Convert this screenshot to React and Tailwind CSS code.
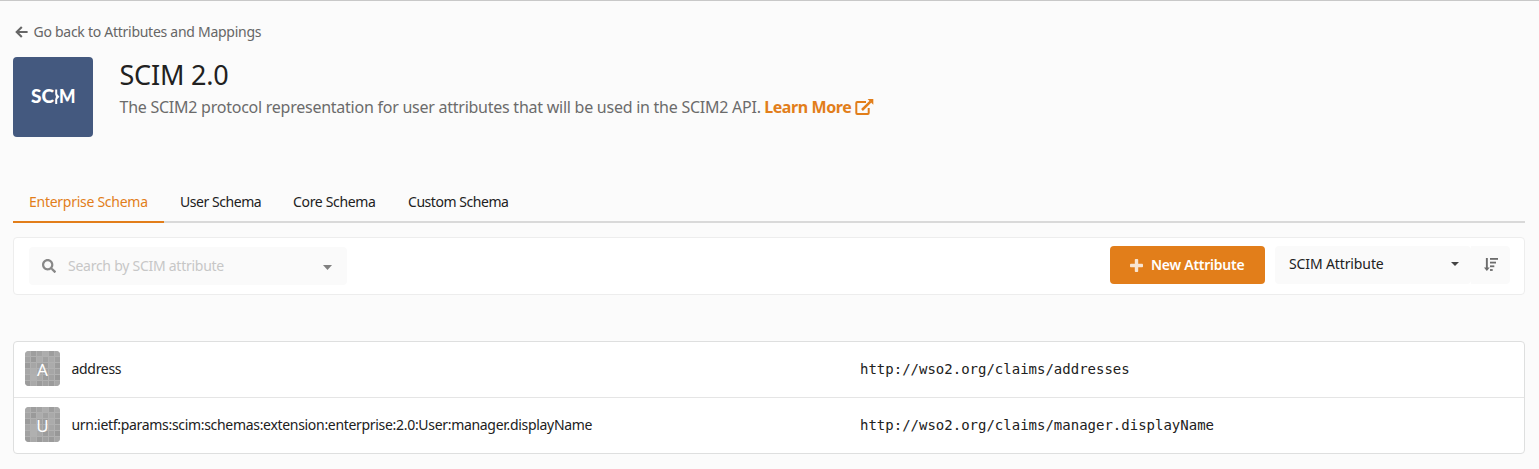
import React from "react";
import { FaSearch } from "react-icons/fa";

const SHADES = [
  "#a9a9a9", "#9e9e9e", "#a3a3a3", "#adadad", "#9d9d9d", "#a8a8a8",
  "#a4a4a4", "#9a9a9a", "#acacac", "#a1a1a1", "#a9a9a9", "#a0a0a0",
  "#9b9b9b", "#a6a6a6", "#a0a0a0", "#9c9c9c", "#ababab", "#9b9b9b",
  "#a7a7a7", "#aeaeae", "#a5a5a5", "#a0a0a0", "#a6a6a6", "#9f9f9f",
  "#a2a2a2", "#b0b0b0", "#a8a8a8", "#9c9c9c", "#a2a2a2", "#989898",
  "#9c9c9c", "#a9a9a9", "#9b9b9b", "#a1a1a1", "#9b9b9b", "#a6a6a6",
];

function Avatar({ letter }) {
  return (
    <div className="relative flex h-[35px] w-[35px] shrink-0 items-center justify-center overflow-hidden rounded-[4px] bg-[#b0b0b0]">
      <svg className="absolute inset-0" width="35" height="35" viewBox="0 0 35 35" shapeRendering="crispEdges">
        {SHADES.map((c, i) => (
          <rect key={i} x={(i % 6) * 6} y={Math.floor(i / 6) * 6} width="5" height="5" fill={c} />
        ))}
      </svg>
      <span className="relative pt-0.5 text-[17px] leading-none text-white">{letter}</span>
    </div>
  );
}

function ArrowLeftIcon() {
  return (
    <svg className="mt-px" width="13" height="12" viewBox="0 0 13 12" fill="none" stroke="#666" strokeWidth="2.1">
      <path d="M6.8 0.9L1.7 6l5.1 5.1M1.5 6H12.6" />
    </svg>
  );
}

function PlusIcon() {
  return (
    <svg width="13" height="13" viewBox="0 0 13 13" fill="#fff" opacity="0.8">
      <rect x="0" y="4.8" width="13" height="3.4" rx="0.8" />
      <rect x="4.8" y="0" width="3.4" height="13" rx="0.8" />
    </svg>
  );
}

function ExternalIcon() {
  return (
    <svg width="19" height="16" viewBox="0 0 19 16" fill="none" stroke="#e27e1a" strokeWidth="2">
      <path d="M11 3H2.2Q1.3 3 1.3 3.9V14q0 1 .9 1h10.6q.9 0 .9-1V9" />
      <path d="M7 11l8.5-8.4" strokeWidth="2.5" />
      <path d="M12.6 0H18.3v5.7z" fill="#e27e1a" stroke="none" />
    </svg>
  );
}

function SortIcon() {
  return (
    <svg width="14" height="14" viewBox="0 0 14 14" fill="#6c6c6c">
      <rect x="1.9" y="0" width="1.9" height="11" />
      <path d="M0 9.5h5.7L2.85 13z" />
      <rect x="6" y="0" width="8" height="1.8" />
      <rect x="6" y="3.7" width="6" height="1.8" />
      <rect x="6" y="7.4" width="4.3" height="1.8" />
      <rect x="6" y="11.1" width="2.7" height="1.8" />
    </svg>
  );
}

function ScimLogo() {
  return (
    <div className="flex h-20 w-20 items-center justify-center rounded-[4px] bg-[#44597f]">
      <svg width="60" height="30" viewBox="0 0 60 30" fill="#fff">
        <text x="8" y="21" fontFamily="Lato" fontWeight="900" fontSize="18.5" textLength="23" lengthAdjust="spacingAndGlyphs">SC</text>
        <path d="M32.2 7.5h2v4.6l2.2 2.6-2.2 2.6v4.7h-2v-4.8l.8-2.5-.8-2.5z" />
        <text x="36" y="21" fontFamily="Lato" fontWeight="900" fontSize="18.5" textLength="16.5" lengthAdjust="spacingAndGlyphs">M</text>
      </svg>
    </div>
  );
}

const ROWS = [
  { letter: "A", name: "address", claim: "http://wso2.org/claims/addresses" },
  {
    letter: "U",
    name: "urn:ietf:params:scim:schemas:extension:enterprise:2.0:User:manager.displayName",
    claim: "http://wso2.org/claims/manager.displayName",
  },
];

export default function App() {
  return (
    <div className="h-[469px] overflow-hidden border-t border-[#c8c8c8] bg-[#fbfbfb] pr-3.5 pl-[13px] font-['Noto_Sans',sans-serif] text-[14px] text-[#212121]">
      <div className="mt-5 flex h-5 items-center gap-[5.5px] pl-0.5 text-[#666]">
        <ArrowLeftIcon />
        <span className="whitespace-nowrap tracking-[-0.27px]">Go back to Attributes and Mappings</span>
      </div>

      <header className="mt-4 flex h-20">
        <ScimLogo />
        <div className="pl-[26.5px]">
          <h1 className="h-[35px] text-[27px] leading-[35px] tracking-[-0.2px] whitespace-nowrap">SCIM 2.0</h1>
          <div className="mt-[5px] flex h-5 items-center whitespace-nowrap text-[16px] text-[#6b6b6b]">
            <span className="tracking-[-0.25px]">The SCIM2 protocol representation for user attributes that will be used in the SCIM2 API.</span>
            <a className="ml-[3.5px] flex items-center gap-[3.5px] font-bold text-[#e27e1a]">
              <span className="tracking-[-0.42px]">Learn More</span>
              <ExternalIcon />
            </a>
          </div>
        </div>
      </header>

      <nav className="mt-[45px] flex h-[41px] border-b-2 border-[#d9d9d9] whitespace-nowrap">
        <div className="h-[41px] w-[151px] border-b-2 border-[#e27e1a] pt-[9px] pl-4 text-[#e27e1a]">
          <span className="tracking-[-0.27px]">Enterprise Schema</span>
        </div>
        <div className="w-[113px] pt-[9px] pl-4"><span className="tracking-[-0.45px]">User Schema</span></div>
        <div className="w-[115px] pt-[9px] pl-4"><span className="tracking-[-0.33px]">Core Schema</span></div>
        <div className="pt-[9px] pl-4"><span className="tracking-[-0.45px]">Custom Schema</span></div>
      </nav>

      <div className="mt-3.5 flex h-[58px] items-start rounded-[4px] border border-[#ededed] bg-white whitespace-nowrap">
        <div className="mt-[9px] ml-[15px] flex h-[38px] w-[318px] items-center rounded-[4px] bg-[#fafafa] pr-[15px] pl-[13px]">
          <FaSearch size={14} color="#888" />
          <span className="ml-3 flex-1 pb-0.5 tracking-[-0.26px] text-[#c7c7c7]">Search by SCIM attribute</span>
          <svg className="mt-0.5" width="9" height="5" viewBox="0 0 9 5" fill="#808080"><path d="M0 0h9L4.5 5z" /></svg>
        </div>
        <button className="mt-2 mr-2.5 ml-auto flex h-[38px] w-[155px] items-center rounded-[4px] bg-[#e27e1a] pl-5 font-semibold text-white">
          <PlusIcon />
          <span className="ml-2 pb-0.5 tracking-[-0.25px]">New Attribute</span>
        </button>
        <div className="mt-2 flex h-[38px] w-[196px] items-center justify-between rounded-[4px] bg-[#fafafa] pr-[12px] pl-[14px]">
          <span className="pb-1 tracking-[-0.12px]">SCIM Attribute</span>
          <svg className="-mt-0.5" width="8" height="4" viewBox="0 0 8 4" fill="#444"><path d="M0 0h8L4 4z" /></svg>
        </div>
        <div className="mt-2 mr-3.5 flex h-[38px] w-[39px] items-center justify-center rounded-r-[4px] bg-[#fafafa]">
          <SortIcon />
        </div>
      </div>

      <div className="mt-[46px] rounded-[4px] border border-[#dedfdf] bg-white">
        {ROWS.map((row, i) => (
          <div key={row.letter} className={`flex items-center pl-[11px] whitespace-nowrap ${i === 0 ? "h-14 border-b border-[#e5e5e5] pb-[3px]" : "h-[55px] pb-[3px]"}`}>
            <Avatar letter={row.letter} />
            <span className="ml-[11.5px] w-[788.5px] tracking-[-0.31px]">{row.name}</span>
            <span className="pt-0.5 font-['DejaVu_Sans_Mono',monospace] text-[14px]">{row.claim}</span>
          </div>
        ))}
      </div>
    </div>
  );
}
